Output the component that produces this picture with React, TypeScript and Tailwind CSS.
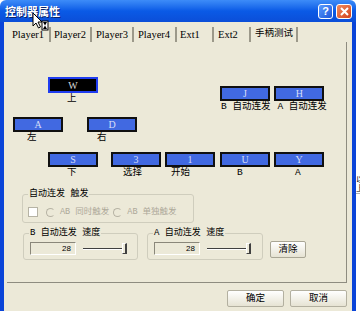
import React from 'react';

const cjk = "font-['Liberation_Mono','Noto_Sans_CJK_SC',monospace]";

type KeyProps = { k: string; label: string; pl: number; selected?: boolean; ml: number };

const Key: React.FC<KeyProps> = ({ k, label, pl, selected, ml }) => (
    <div className="flex flex-col" style={{ marginLeft: ml }}>
        <div
            className={
                selected
                    ? "w-[50px] h-[16px] bg-black border-2 border-[#1f3cf0] flex items-center justify-center text-[10px] text-[#d8d8d8] font-['Liberation_Serif',serif]"
                    : "w-[50px] h-[15px] bg-[#4169e1] border-2 border-[#101010] flex items-center justify-center text-[10px] text-[#d6def8] font-['Liberation_Serif',serif]"
            }
        >
            {k}
        </div>
        <div className={`h-[12px] leading-[12px] text-[9.5px] text-black whitespace-nowrap ${cjk}`} style={{ paddingLeft: pl }}>
            {label}
        </div>
    </div>
);

const tabs = [
    { t: 'Player1', w: 43, pl: 4 },
    { t: 'Player2', w: 41, pl: 3 },
    { t: 'Player3', w: 42, pl: 4 },
    { t: 'Player4', w: 43, pl: 4 },
    { t: 'Ext1', w: 37, pl: 3 },
    { t: 'Ext2', w: 37, pl: 4 },
    { t: '手柄测试', w: 47, pl: 4 },
];

const Slider: React.FC = () => (
    <div className="flex items-center ml-[7px] h-[13px]">
        <div className="w-[39px] h-[2px] border-t border-[#404040] border-b border-b-white" />
        <div className="w-[5px] h-[11px] border-t border-l border-white border-r-2 border-b border-r-[#404040] border-b-[#404040] bg-[#ECE9D8]" />
    </div>
);

const SpeedBox: React.FC<{ legend: string; w: number; ml: number }> = ({ legend, w, ml }) => (
    <fieldset
        className="border border-[#cfcdbd] rounded-[3px] pl-[5px] pb-[4px]"
        style={{ width: w, marginLeft: ml }}
    >
        <legend className={`px-[1px] text-[9px] leading-[12px] text-black whitespace-pre ${cjk}`}>{legend}</legend>
        <div className="flex items-center mt-[3px] ml-[1px]">
            <div className="w-[46px] h-[13px] border-t border-l border-[#8a877a] border-b border-r border-b-white border-r-white bg-[#ECE9D8] text-right pr-[4px] text-[8px] leading-[11px] font-['Liberation_Sans',sans-serif] text-black">
                28
            </div>
            <Slider />
        </div>
    </fieldset>
);

export default function App() {
    return (
        <div className="w-[360px] h-[311px] flex overflow-hidden bg-white relative">
            {/* Window */}
            <div className="w-[356px] flex flex-col shrink-0">
                {/* Title bar */}
                <div className="h-[22px] rounded-t-[6px] bg-linear-to-b from-[#3d8cf8] via-[#0a5ae6] to-[#0b4ed8] flex items-center pl-[5px] pr-[4px]">
                    <span className="text-white font-bold text-[11px] font-['Noto_Sans_CJK_SC',sans-serif] [text-shadow:1px_1px_0_#0a246a]">控制器属性</span>
                    <div className="ml-auto flex gap-[3px]">
                        <div className="w-[15px] h-[15px] rounded-[3px] border border-white bg-linear-to-br from-[#5a9bff] to-[#1f55d8] flex items-center justify-center text-white font-bold text-[11px] font-['Liberation_Sans',sans-serif] leading-none">
                            ?
                        </div>
                        <div className="w-[16px] h-[15px] rounded-[3px] border border-white bg-linear-to-br from-[#f08a5c] to-[#d2401a] flex items-center justify-center">
                            <svg width="9" height="9" viewBox="0 0 9 9">
                                <path d="M1 1 L8 8 M8 1 L1 8" stroke="white" strokeWidth="2" />
                            </svg>
                        </div>
                    </div>
                </div>

                {/* Body */}
                <div className="flex-1 bg-[#ECE9D8] border-x-4 border-[#0a44d8] flex flex-col">
                    {/* Tabs */}
                    <div className="flex mt-[5px] ml-[4px] h-[15px]">
                        {tabs.map((tab) => (
                            <div
                                key={tab.t}
                                className={`h-[15px] border-r-2 border-[#9c998a] flex items-center text-black whitespace-nowrap ${tab.t === '手柄测试' ? `text-[9.5px] ${cjk}` : "text-[10.5px] font-['Liberation_Serif',serif]"}`}
                                style={{ width: tab.w, paddingLeft: tab.pl }}
                            >
                                {tab.t}
                            </div>
                        ))}
                    </div>

                    {/* Tab page */}
                    <div className="ml-[3px] w-[340px] h-[241px] border-r border-b border-[#8e8c80] flex flex-col">
                        {/* Row 1 */}
                        <div className="flex items-start">
                            <div className="mt-[35px]">
                                <Key k="W" label="上" pl={19} ml={41} selected />
                            </div>
                            <div className="mt-[44px] flex">
                                <Key k="J" label="B 自动连发" pl={1} ml={122} />
                                <Key k="H" label="A 自动连发" pl={3} ml={4} />
                            </div>
                        </div>
                        {/* Row 2 */}
                        <div className="flex mt-[4px]">
                            <Key k="A" label="左" pl={14} ml={6} />
                            <Key k="D" label="右" pl={10} ml={24} />
                        </div>
                        {/* Row 3 */}
                        <div className="flex mt-[8px]">
                            <Key k="S" label="下" pl={19} ml={41} />
                            <Key k="3" label="选择" pl={12} ml={13} />
                            <Key k="1" label="开始" pl={6} ml={4} />
                            <Key k="U" label="B" pl={17} ml={5} />
                            <Key k="Y" label="A" pl={21} ml={4} />
                        </div>

                        {/* Auto fire trigger group */}
                        <fieldset className="ml-[15px] mt-[9px] w-[172px] h-[35px] border border-[#cfcdbd] rounded-[3px] pl-[5px]">
                            <legend className={`px-[1px] text-[9px] leading-[12px] text-black whitespace-pre ${cjk}`}>自动连发 触发</legend>
                            <div className="flex items-center mt-[6px] text-[8.5px] text-[#aca899] font-['Liberation_Mono','Noto_Sans_CJK_SC',monospace] whitespace-pre">
                                <div className="w-[10px] h-[10px] bg-white border border-[#b6b3a4]" />
                                <div className="ml-[8px] w-[9px] h-[9px] rounded-full border border-[#b6b3a4] border-r-transparent" />
                                <span className="ml-[5px]">AB 同时触发</span>
                                <div className="ml-[4px] w-[9px] h-[9px] rounded-full border border-[#b6b3a4] border-r-transparent" />
                                <span className="ml-[5px]">AB 单独触发</span>
                            </div>
                        </fieldset>

                        {/* Speed groups */}
                        <div className="flex items-start mt-[4px]">
                            <SpeedBox legend="B 自动连发 速度" w={115} ml={16} />
                            <SpeedBox legend="A 自动连发 速度" w={116} ml={9} />
                            <button className={`ml-[7px] mt-[14px] w-[36px] h-[17px] rounded-[2px] border border-[#a9a695] bg-linear-to-b from-white to-[#e6e3d3] text-[9.5px] leading-none text-black ${cjk}`}>
                                清除
                            </button>
                        </div>
                    </div>

                    {/* Dialog buttons */}
                    <div className="flex justify-end gap-[6px] mt-[7px] w-[343px]">
                        <button className={`w-[57px] h-[17px] rounded-[2px] border border-[#b3b0a0] bg-linear-to-b from-white to-[#e6e3d3] text-[9.5px] leading-none text-black ${cjk}`}>
                            确定
                        </button>
                        <button className={`w-[57px] h-[17px] rounded-[2px] border border-[#b3b0a0] bg-linear-to-b from-white to-[#e6e3d3] text-[9.5px] leading-none text-black ${cjk}`}>
                            取消
                        </button>
                    </div>
                </div>
            </div>

            {/* Window behind (right edge) */}
            <div className="flex-1 bg-white flex flex-col pt-[175px] overflow-hidden">
                <div className={`h-[9px] text-[8px] leading-[9px] text-black whitespace-nowrap ${cjk}`}>以</div>
                <div className={`h-[9px] text-[8px] leading-[9px] text-black whitespace-nowrap ${cjk}`}>上</div>
                <div className="h-px bg-[#b0b0b0]" />
            </div>

            {/* Mouse cursor */}
            <svg className="absolute left-[32px] top-[12px]" width="18" height="20" viewBox="0 0 18 20">
                <path d="M1 1 L1 14 L4 11 L6.5 16 L8.5 15 L6 10 L10 10 Z" fill="white" stroke="black" strokeWidth="1" />
                <rect x="10" y="9" width="6" height="9" fill="white" stroke="black" strokeWidth="1" />
                <path d="M11 10 L15 10 L13 13.5 L15 17 L11 17 L13 13.5 Z" fill="black" />
            </svg>
        </div>
    );
}
